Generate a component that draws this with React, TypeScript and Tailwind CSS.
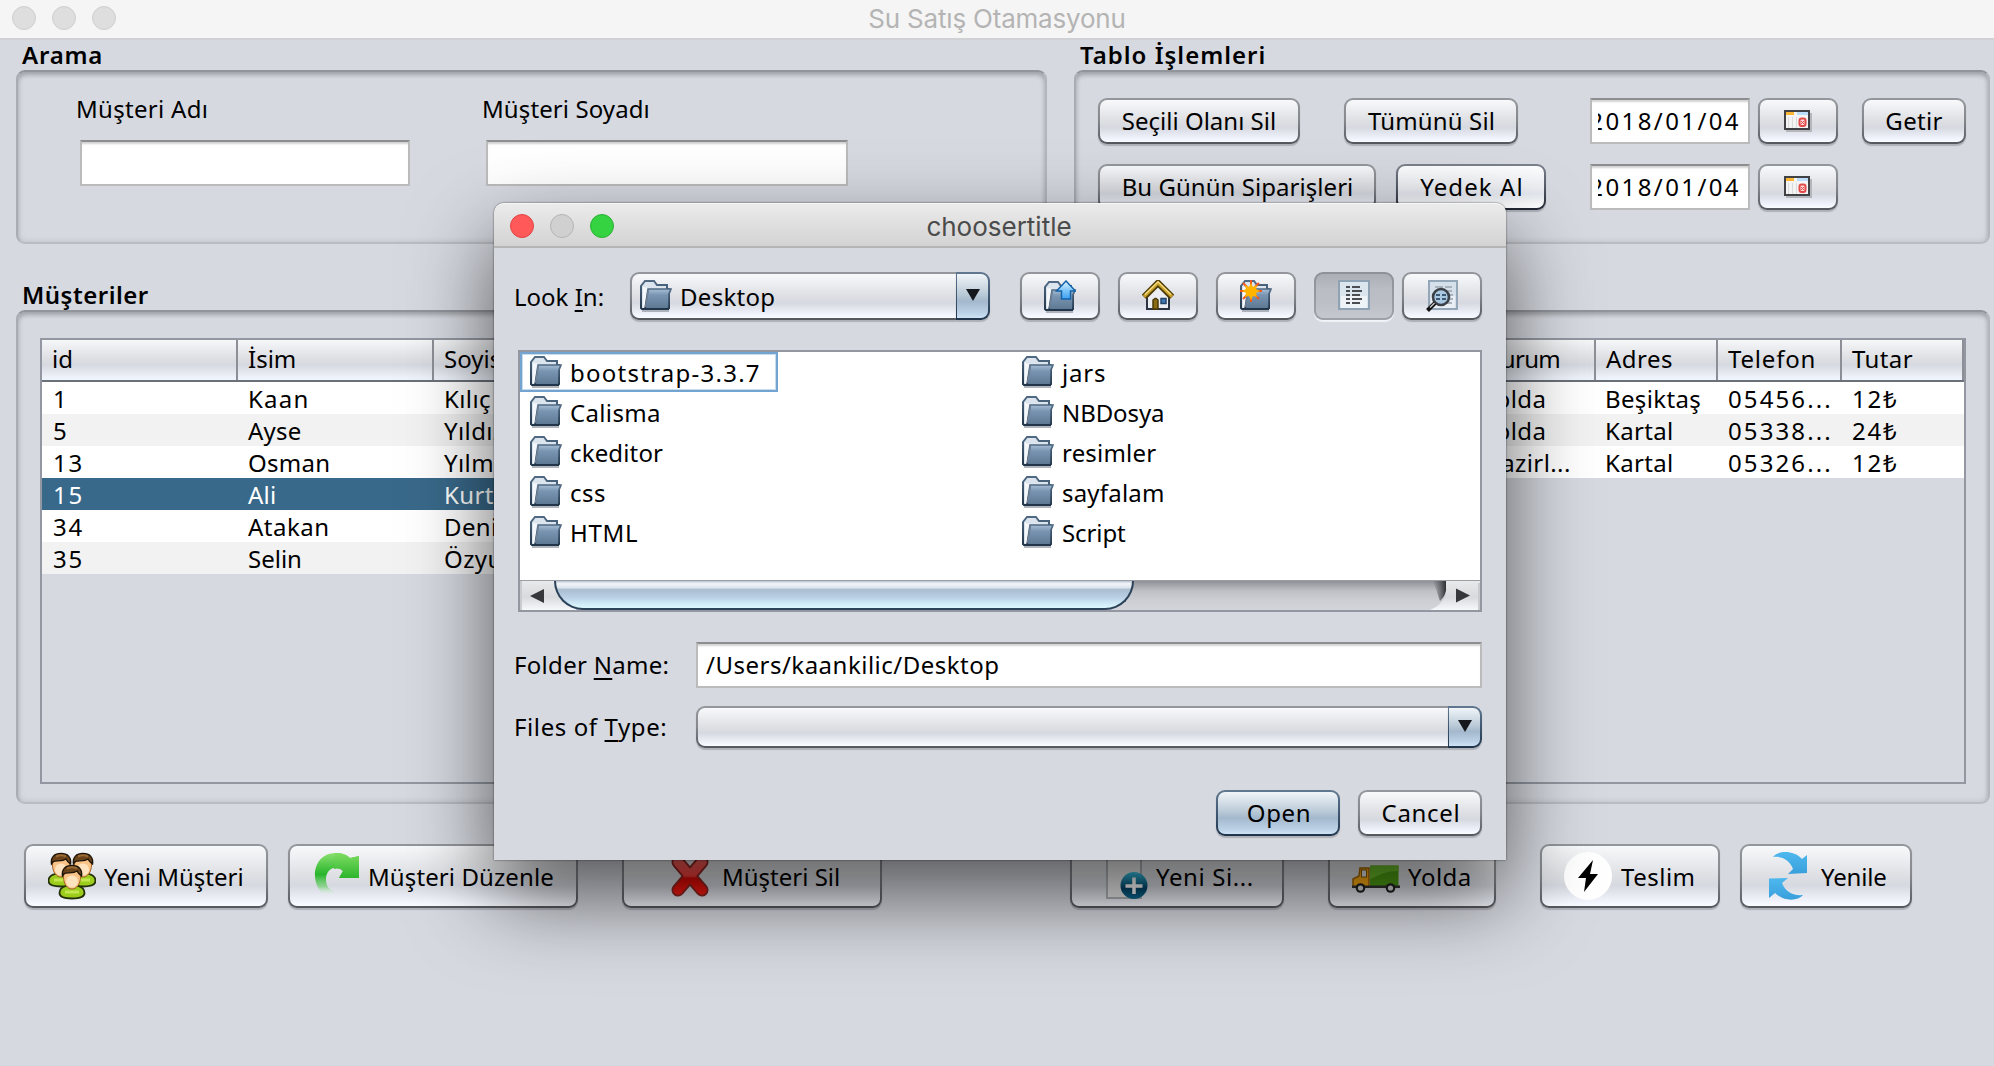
import React from 'react';

type Kids = { children?: React.ReactNode; className?: string };

const fillLight =
  '[background:linear-gradient(#f8f9fb,#dfe0e4_48%,#d6d9e0_66%,#f3f6fe_94%,#fbfcff)_padding-box,linear-gradient(#94979c,#84878c_50%,#54575e)_border-box]';
const fillHover =
  '[background:linear-gradient(#fcfdfe,#eceef2_50%,#e4e7ee_66%,#fdfeff_94%)_padding-box,linear-gradient(#7c828c,#565c68_50%,#1f2532)_border-box]';
const fillBlue =
  '[background:linear-gradient(#f0f5f8,#bccbd8_45%,#a3b8cc_62%,#bdd3e8_90%,#cfe3f5)_padding-box,linear-gradient(#617890,#3f5871_50%,#1f344b)_border-box]';
const fillPressed =
  '[background:linear-gradient(#abaeb5,#babdc4_35%,#bbbec5_60%,#c4c7ce)_padding-box,linear-gradient(#8e9197,#9ea1a7)_border-box]';

function Button({ children, className = '', fill = fillLight }: Kids & { fill?: string }) {
  return (
    <button
      className={`flex shrink-0 items-center rounded-[9px] border-2 border-transparent whitespace-nowrap shadow-[0_2px_1px_#adb0b7] ${fill} ${className}`}
    >
      {children}
    </button>
  );
}

function Group({ title, children, className = '' }: Kids & { title: React.ReactNode }) {
  return (
    <section className={`flex flex-col ${className}`}>
      <h2 className="flex h-[31px] shrink-0 items-center pl-1.5 font-semibold tracking-[0.8px]">{title}</h2>
      <div className="min-h-0 flex-1 rounded-[9px] border-2 border-t-[#919499] border-r-[#b3b6bb] border-b-[#b9bcc2] border-l-[#a9acb1] shadow-[inset_0_4px_5px_-1px_rgba(0,0,0,0.22),inset_0_0_6px_rgba(0,0,0,0.12)]">
        {children}
      </div>
    </section>
  );
}

function Field({ children, className = '' }: Kids) {
  return (
    <div
      className={`flex h-[46px] shrink-0 items-center overflow-hidden border-2 border-[#bbbbbc] border-t-[#8d8e90] bg-white whitespace-nowrap shadow-[inset_0_3px_2px_-1px_#d2d2d4] ${className}`}
    >
      {children}
    </div>
  );
}

function Folder() {
  return (
    <svg viewBox="0 0 32 32" className="size-8 shrink-0">
      <defs>
        <linearGradient id="front" x1="0" y1="0" x2="0" y2="1">
          <stop offset="0" stopColor="#a9bfd6" />
          <stop offset="0.3" stopColor="#7a95b2" />
          <stop offset="1" stopColor="#5c7791" />
        </linearGradient>
        <linearGradient id="edge" x1="0" y1="0" x2="0" y2="1">
          <stop offset="0" stopColor="#506a84" />
          <stop offset="1" stopColor="#22364b" />
        </linearGradient>
      </defs>
      <path d="M2 31h27" stroke="#9fa3ab" strokeWidth="2" opacity=".8" />
      <path d="M1 28V6l4-5h9l3 4h10v4h2v19l-1 1H2z" fill="#dce5ee" stroke="url(#edge)" strokeWidth="2" />
      <path d="M3 7v20h2L8 8z" fill="#f5f8fb" />
      <path d="M8 9h23l-2 5v13l-1 2H5z" fill="url(#front)" stroke="url(#edge)" strokeWidth="1.6" />
      <path d="M8.500 9.500 5.500 27" stroke="#6f8297" strokeWidth="1.600" />
      <path d="M2 29h27" stroke="#22364b" strokeWidth="2" />
    </svg>
  );
}

function FolderUp() {
  return (
    <div className="relative size-8">
      <div className="mt-px">
        <Folder />
      </div>
      <svg viewBox="0 0 32 32" className="absolute inset-0 size-8">
        <defs>
          <linearGradient id="up" x1="0" y1="0" x2="0" y2="1">
            <stop offset="0" stopColor="#e3f5ff" />
            <stop offset="0.5" stopColor="#82c8fb" />
            <stop offset="1" stopColor="#3d9ff0" />
          </linearGradient>
        </defs>
        <path d="M22 1 31.500 11h-5v8h-9v-8h-5z" fill="url(#up)" stroke="#1463a8" strokeWidth="1.500" />
      </svg>
    </div>
  );
}

function Home() {
  return (
    <svg viewBox="0 0 32 32" className="size-8">
      <path d="M5 15v14h22V15L16 5z" fill="#eceef2" stroke="#2b3440" strokeWidth="2" />
      <path d="M11 29v-9l2-1.500h1l2 1.500v9z" fill="#8a6a12" stroke="#4b3a08" strokeWidth="1.500" />
      <rect x="19" y="18.500" width="5" height="5" fill="#3e79b5" stroke="#264668" strokeWidth="1.500" />
      <path d="M2 17 16 3l14 14" fill="none" stroke="#4f3d08" strokeWidth="6.500" />
      <path d="M2 16.500 16 2.800l14 13.700" fill="none" stroke="#c9a227" strokeWidth="3.200" />
      <path d="M3 14.500 16 1.800l13 12.700" fill="none" stroke="#f3df8e" strokeWidth="1.200" />
    </svg>
  );
}

function NewFolder() {
  return (
    <div className="relative size-8">
      <Folder />
      <svg viewBox="0 0 32 32" className="absolute inset-0 size-8">
        <g stroke="#f4581c" strokeWidth="2">
          <path d="M11 0v22M0 11h22M3 3l16 16M19 3 3 19" />
        </g>
        <path d="m11 3 2 4 4-2-1 4 4 2-4 2 1 4-4-1-2 4-2-4-4 1 1-4-4-2 4-2-1-4 4 2z" fill="#ffb400" />
      </svg>
    </div>
  );
}

function ListIcon() {
  return (
    <svg viewBox="0 0 32 32" className="size-8">
      <rect x="1" y="1" width="30" height="28" fill="#dbe5ee" stroke="#8fa2b4" strokeWidth="2" />
      <rect x="3" y="16" width="26" height="12" fill="#eef3f7" />
      <path d="M8 7h4M8 11h4M8 15h4M8 19h4M8 23h4" stroke="#4a4d52" strokeWidth="2" />
      <path d="M14 7h8M14 11h10M14 15h8M14 19h10M14 23h8" stroke="#4a4d52" strokeWidth="2" />
    </svg>
  );
}

function Magnifier() {
  return (
    <svg viewBox="0 0 32 32" className="size-8">
      <rect x="3" y="1" width="28" height="28" fill="#d5e0ea" stroke="#93a7b9" strokeWidth="2" />
      <rect x="5" y="16" width="24" height="12" fill="#e9eff5" />
      <path d="M9 7h8M19 7h7M22 11h4M24 15h3M24 19h3M20 23h6" stroke="#a8b3be" strokeWidth="2" />
      <circle cx="15" cy="17" r="8" fill="#a9c8e2" stroke="#3c4148" strokeWidth="2.600" />
      <path d="M10 15h4M16 15h4M10 19h4M16 19h4" stroke="#3f5872" strokeWidth="2" />
      <path d="M9 23 1.500 30.500" stroke="#111" strokeWidth="4" />
      <path d="M8.500 23 4 27.500" stroke="#c7c9cc" strokeWidth="1.500" />
    </svg>
  );
}

function Calendar() {
  return (
    <svg viewBox="0 0 28 22" className="h-[22px] w-7">
      <path d="M2 21h25V3" fill="none" stroke="#b5b7bc" strokeWidth="2" />
      <rect x="1" y="1" width="24" height="18" fill="#f4f4f4" stroke="#3f4145" strokeWidth="2" />
      <rect x="2" y="2" width="8" height="3" fill="#fdb634" />
      <rect x="13" y="2" width="11" height="3" fill="#bcdcfb" />
      <path d="M4.500 7v11M8.500 7v11M12.500 7v11" stroke="#dadada" />
      <rect x="15.500" y="8.500" width="6" height="7.500" rx="2" fill="#fbd9d7" stroke="#e34b4b" strokeWidth="2" />
      <path d="m17 11 3 3m0-3-3 3" stroke="#e34b4b" />
    </svg>
  );
}

function Head({ x, y }: { x: number; y: number }) {
  return (
    <g transform={`translate(${x} ${y})`}>
      <path
        d="M-6 15c-4 1-6.500 3-6.500 7 0 3.500 4 5.500 12.500 5.500s12.500-2 12.500-5.500c0-4-2.500-6-6.500-7z"
        fill="#9ccc1c"
        stroke="#23300a"
        strokeWidth="1.800"
      />
      <path d="M-7 21h14" stroke="#c3e64e" strokeWidth="3" />
      <path d="M-8.500 6c0-5 3.500-7 8.500-7s8.500 2 8.500 7c0 7-4 12-8.500 12S-8.500 13-8.500 6z" fill="#f9c388" stroke="#a5631f" strokeWidth="1" />
      <ellipse cy="10.500" rx="6" ry="6" fill="#ffe3bf" />
      <path
        d="M-9.500 5c-1-7 3-10.500 9.500-10.500S10.500-2 9.500 5C7.500 3.500 6 2 5 0 1 3-5 1-7.500 2.500c-1 .5-1 1.500-2 2.500z"
        fill="#6b431a"
        stroke="#1d1408"
        strokeWidth="1.400"
      />
      <path d="M-5-2.500c3-1.500 7-1.500 10 0" stroke="#9a6a34" strokeWidth="2" fill="none" />
    </g>
  );
}

function People() {
  return (
    <svg viewBox="0 0 48 48" className="size-12">
      <Head x={13} y={7} />
      <Head x={35} y={7} />
      <Head x={24} y={19} />
    </svg>
  );
}

function Redo() {
  return (
    <svg viewBox="0 0 48 48" className="size-12">
      <defs>
        <linearGradient id="redo" x1="0" y1="0" x2="0" y2="1">
          <stop offset="0" stopColor="#8be070" />
          <stop offset="0.5" stopColor="#27b52b" />
          <stop offset="0.78" stopColor="#6fcf70" stopOpacity=".7" />
          <stop offset="1" stopColor="#fff" stopOpacity="0" />
        </linearGradient>
        <linearGradient id="redoHead" x1="0" y1="0" x2="0" y2="1">
          <stop offset="0" stopColor="#7fdc62" />
          <stop offset="1" stopColor="#2db52d" />
        </linearGradient>
      </defs>
      <path d="M14 44C-2 36-2 2 23 1c8 0 12 2 15 5l9-2v22H27l4-7c-7-7-17-2-17 8 0 7 3 11 9 13-4 3-7 4-9 4z" fill="url(#redo)" />
      <path d="M38 6l9-2v22H27l4-7c-3-3-6-3-9-2L23 1c8 0 12 2 15 5z" fill="url(#redoHead)" />
    </svg>
  );
}

function Cross() {
  return (
    <svg viewBox="0 0 48 48" className="size-12">
      <defs>
        <linearGradient id="cross" gradientUnits="userSpaceOnUse" x1="0" y1="4" x2="0" y2="44">
          <stop offset="0" stopColor="#ff6a65" />
          <stop offset="0.5" stopColor="#f8403c" />
          <stop offset="0.55" stopColor="#dc0a06" />
          <stop offset="1" stopColor="#ff1b12" />
        </linearGradient>
      </defs>
      <path d="M12 10 36 38M36 10 12 38" stroke="#8e2622" strokeWidth="13" strokeLinecap="round" />
      <path d="M12 10 36 38M36 10 12 38" stroke="url(#cross)" strokeWidth="9.500" strokeLinecap="round" />
    </svg>
  );
}

function NewOrder() {
  return (
    <svg viewBox="0 0 48 48" className="size-12">
      <rect x="7" y="1" width="34" height="45" fill="#ededed" stroke="#b2b4b8" strokeWidth="2" />
      <defs>
        <linearGradient id="ball" x1="0" y1="0" x2="0" y2="1">
          <stop offset="0" stopColor="#39c6ea" />
          <stop offset="0.6" stopColor="#044468" />
          <stop offset="1" stopColor="#0b6f98" />
        </linearGradient>
      </defs>
      <circle cx="34" cy="33.500" r="13.500" fill="url(#ball)" />
      <path d="M34 25.500v16.500M25.500 34h17" stroke="#fff" strokeWidth="3.500" />
    </svg>
  );
}

function Truck() {
  return (
    <svg viewBox="0 0 48 48" className="size-12">
      <path d="M1 34v-7l6-3 1-8h9v19H2z" fill="#ffae14" stroke="#a86a00" strokeWidth="1.500" />
      <rect x="9.500" y="18" width="5" height="7" fill="#e6eef5" stroke="#8a5a00" />
      <rect x="18" y="13.500" width="28.500" height="20.500" fill="#4f9f14" />
      <path d="M18 13.500h28.500v6C36 18 28 23 18 27z" fill="#6cc02a" />
      <rect y="33.500" width="48" height="2.500" fill="#333" />
      <circle cx="8.500" cy="36" r="4.800" fill="#222" />
      <circle cx="8.500" cy="36" r="2.600" fill="#ddd" />
      <circle cx="38.500" cy="36" r="4.800" fill="#222" />
      <circle cx="38.500" cy="36" r="2.600" fill="#ddd" />
    </svg>
  );
}

function Bolt() {
  return (
    <svg viewBox="0 0 48 48" className="size-12">
      <circle cx="24" cy="24" r="24" fill="#fff" />
      <path d="M29 8 14 26h8l-2 14 14-18h-8z" fill="#000" />
    </svg>
  );
}

function Refresh() {
  return (
    <svg viewBox="0 0 48 48" className="size-12">
      <defs>
        <linearGradient id="rf" x1="0" y1="0" x2="0" y2="1">
          <stop offset="0" stopColor="#4db8ee" />
          <stop offset="1" stopColor="#3a9fdc" />
        </linearGradient>
      </defs>
      <path d="M9 5C13-1 29-3 38 7l5-4v18l-19 1 5-5C26 9 19 4 9 5z" fill="url(#rf)" />
      <path d="M39 43c-5 6-19 7-28-2l-6 5V26.500L24 26l-6 5c3 8 10 13 21 12z" fill="url(#rf)" />
    </svg>
  );
}

const header =
  'flex items-center bg-[linear-gradient(#f6f7f9,#dfe0e4_45%,#d6d9e0_62%,#eff3fb_95%)] pb-0.5 border-r-2 border-[#8c9096]';

const customers = [
  ['1', 'Kaan', 'Kılıç', 'tracking-[1.2px]'],
  ['5', 'Ayse', 'Yıldız', 'tracking-[0.2px]'],
  ['13', 'Osman', 'Yılmaz', 'tracking-[0.3px]'],
  ['15', 'Ali', 'Kurt', 'tracking-[0.2px]'],
  ['34', 'Atakan', 'Deniz', 'tracking-[0.5px]'],
  ['35', 'Selin', 'Özyurt', 'tracking-[0px]'],
];

const orders = [
  ['Yolda', 'Beşiktaş', '05456...', '12₺'],
  ['Yolda', 'Kartal', '05338...', '24₺'],
  ['Hazirl...', 'Kartal', '05326...', '12₺'],
];

function CustomerTable() {
  return (
    <div className="w-[900px] border-2 border-[#9297a1]">
      <div className="grid h-[42px] grid-cols-[196px_196px_1fr] border-b-2 border-[#6b707a]">
        <div className={`${header} pl-2.5`}>id</div>
        <div className={`${header} pl-2.5`}>İsim</div>
        <div className={`${header} pl-2.5`}>Soyisim</div>
      </div>
      {customers.map(([id, name, surname, track], i) => (
        <div
          key={id}
          className={`grid h-8 grid-cols-[196px_196px_1fr] items-start pt-px leading-[31px] ${
            i === 3 ? 'bg-[#39698a] text-white' : i % 2 ? 'bg-[#f2f2f2]' : 'bg-white'
          }`}
        >
          <span className="pl-[11px] tracking-[1.8px]">{id}</span>
          <span className={`pl-2.5 ${track}`}>{name}</span>
          <span className="pl-2.5 tracking-[0.4px]">{surname}</span>
        </div>
      ))}
    </div>
  );
}

function OrderTable() {
  const cols = 'grid-cols-[1fr_122px_124px_122px]';
  return (
    <div className="w-[900px] border-2 border-[#9297a1]">
      <div className={`grid h-[42px] ${cols} border-b-2 border-[#6b707a]`}>
        <div className={`${header} justify-end`}>
          <span className="w-[110px] tracking-[-0.7px]">Durum</span>
        </div>
        <div className={`${header} pl-2.5 tracking-[0.5px]`}>Adres</div>
        <div className={`${header} pl-2.5 tracking-[0.8px]`}>Telefon</div>
        <div className={`${header} pl-2.5 tracking-[0.4px]`}>Tutar</div>
      </div>
      {orders.map(([state, city, phone, sum], i) => (
        <div
          key={phone}
          className={`grid h-8 ${cols} items-start pt-px leading-[31px] ${i % 2 ? 'bg-[#f2f2f2]' : 'bg-white'}`}
        >
          <span className="flex justify-end">
            <span className="w-[113px] tracking-[0.4px]">{state}</span>
          </span>
          <span className="pl-[9px] tracking-[0.35px]">{city}</span>
          <span className="pl-2.5 tracking-[2.1px]">{phone}</span>
          <span className="pl-2.5 tracking-[1.8px]">{sum}</span>
        </div>
      ))}
    </div>
  );
}

function MainWindow() {
  return (
    <div className="flex h-full flex-col">
      <header className="flex h-10 shrink-0 items-center border-b-2 border-[#d0d1d4] bg-[#f5f5f5] px-3">
        <div className="flex w-40 gap-4 pb-0.5">
          <i className="size-6 rounded-full border border-[#cfcfcf] bg-[#dedede]" />
          <i className="size-6 rounded-full border border-[#cfcfcf] bg-[#dedede]" />
          <i className="size-6 rounded-full border border-[#cfcfcf] bg-[#dedede]" />
        </div>
        <h1 className="flex-1 pr-40 text-center font-[Inter] text-[26px] leading-8 tracking-[-0.2px] text-[#b4b4b4]">
          Su Satış Otamasyonu
        </h1>
      </header>

      <div className="-mt-px flex h-[205px] shrink-0 gap-[27px] pl-4">
        <Group title="Arama" className="w-[1031px]">
          <div className="flex pt-[21px] pl-[58px]">
            <label className="flex w-[406px] flex-col tracking-[0.3px]">
              <span className="h-8">Müşteri Adı</span>
              <Field className="mt-[15px] ml-1 w-[330px]" />
            </label>
            <label className="flex flex-col tracking-[0.1px]">
              <span className="h-8">Müşteri Soyadı</span>
              <Field className="mt-[15px] ml-1 w-[362px]" />
            </label>
          </div>
        </Group>

        <Group title={<span className="tracking-[1px]">Tablo İşlemleri</span>} className="w-[916px]">
          <div className="flex flex-col gap-5 pt-[26px] pl-[22px]">
            <div className="flex">
              <Button className="h-[46px] w-[202px] justify-center">Seçili Olanı Sil</Button>
              <Button className="ml-11 h-[46px] w-[174px] justify-center pl-px tracking-[0.15px]">Tümünü Sil</Button>
              <Field className="ml-[72px] w-40 pr-[7px] pl-1.5">
                <div className="flex w-full justify-end overflow-hidden tracking-[2.4px]">2018/01/04</div>
              </Field>
              <Button className="ml-2 h-[46px] w-20 justify-center">
                <Calendar />
              </Button>
              <Button className="ml-6 h-[46px] w-[104px] justify-center tracking-[0.3px]">Getir</Button>
            </div>
            <div className="flex">
              <Button className="h-[46px] w-[278px] justify-center pl-px tracking-[0.05px]">Bu Günün Siparişleri</Button>
              <Button fill={fillHover} className="ml-5 h-[46px] w-[150px] justify-center pl-0.5 tracking-[1.1px]">
                Yedek Al
              </Button>
              <Field className="ml-11 w-40 pr-[7px] pl-1.5">
                <div className="flex w-full justify-end overflow-hidden tracking-[2.4px]">2018/01/04</div>
              </Field>
              <Button className="ml-2 h-[46px] w-20 justify-center">
                <Calendar />
              </Button>
            </div>
          </div>
        </Group>
      </div>

      <Group title={<span className="tracking-[0.5px]">Müşteriler</span>} className="mt-[35px] ml-4 h-[525px] w-[1974px] shrink-0">
        <div className="flex h-[472px] justify-between pt-[26px] pr-[22px] pl-[22px]">
          <CustomerTable />
          <OrderTable />
        </div>
      </Group>

      <footer className="mt-10 flex pl-6">
        <Button className="h-16 w-[244px] gap-2 pl-[22px]">
          <People />
          <span className="mt-0.5">Yeni Müşteri</span>
        </Button>
        <Button className="ml-5 h-16 w-[290px] gap-2 pl-[22px] tracking-[0.1px]">
          <Redo />
          <span className="mt-0.5">Müşteri Düzenle</span>
        </Button>
        <Button className="ml-11 h-16 w-[260px] gap-2 pl-[42px]">
          <Cross />
          <span className="mt-0.5">Müşteri Sil</span>
        </Button>
        <Button className="ml-[188px] h-16 w-[214px] gap-2 pl-7 tracking-[0.6px]">
          <NewOrder />
          <span className="mt-0.5">Yeni Si...</span>
        </Button>
        <Button className="ml-11 h-16 w-[168px] gap-2 pl-[22px] tracking-[0.5px]">
          <Truck />
          <span className="mt-0.5">Yolda</span>
        </Button>
        <Button className="ml-11 h-16 w-[180px] gap-2 pl-[22px] tracking-[0.5px]">
          <Bolt />
          <span className="mt-0.5 pl-px">Teslim</span>
        </Button>
        <Button className="ml-5 h-16 w-[172px] gap-2 pl-[22px] tracking-[-0.2px]">
          <Refresh />
          <span className="mt-0.5 pl-px">Yenile</span>
        </Button>
      </footer>
    </div>
  );
}

const files: [string, string][] = [
  ['bootstrap-3.3.7', 'tracking-[1.250px]'],
  ['Calisma', 'tracking-[0.350px]'],
  ['ckeditor', 'tracking-[0.150px]'],
  ['css', 'tracking-[0.500px]'],
  ['HTML', 'tracking-[0.700px]'],
  ['jars', 'tracking-[0.800px]'],
  ['NBDosya', 'tracking-[-0.100px]'],
  ['resimler', 'tracking-[0.200px]'],
  ['sayfalam', 'tracking-[0.200px]'],
  ['Script', 'tracking-[-0.100px]'],
];

function Combo({ children, className = '' }: Kids) {
  return (
    <div className={`flex ${className}`}>
      <div
        className={`flex flex-1 items-center rounded-l-[9px] border-2 border-r-0 border-transparent shadow-[0_2px_1px_#adb0b7] ${fillLight}`}
      >
        {children}
      </div>
      <div
        className={`flex w-[34px] items-center justify-center rounded-r-[9px] border-2 border-l border-transparent shadow-[0_2px_1px_#adb0b7] ${fillBlue}`}
      >
        <svg viewBox="0 0 14 12" className="-mt-0.5 h-3 w-3.5">
          <path d="M0 0h14L7 12z" fill="#15181c" />
        </svg>
      </div>
    </div>
  );
}

function ScrollBar() {
  return (
    <div className="relative flex h-[30px] border-t border-[#9b9ea4] bg-[linear-gradient(#8f9197,#bfc1c6_35%,#cdcfd4_70%,#d3d5da)]">
      <div className="flex w-14 items-center border-l-2 border-[#c9cbcf] bg-[linear-gradient(#e8e9eb,#d8dadd_55%,#f6f8fb)] pl-2">
        <svg viewBox="0 0 14 14" className="h-3.5 w-3.5">
          <path d="M14 0v14L0 7z" fill="#35373a" />
        </svg>
      </div>
      <div className="ml-auto flex w-[50px] items-center justify-end">
        <svg viewBox="0 0 50 29" className="h-[29px] w-[50px]">
          <defs>
            <linearGradient id="sbEnd" x1="0" y1="0" x2="0" y2="1">
              <stop offset="0" stopColor="#e8e9eb" />
              <stop offset="0.55" stopColor="#d8dadd" />
              <stop offset="1" stopColor="#f6f8fb" />
            </linearGradient>
            <linearGradient id="sbDark" x1="0" y1="0" x2="1" y2="0">
              <stop offset="0" stopColor="#55575b" stopOpacity="0" />
              <stop offset="1" stopColor="#2d2f33" />
            </linearGradient>
          </defs>
          <path d="M2 0h14v10c-1 4-3 7-6 10C7 12 6 5 2 0z" fill="url(#sbDark)" />
          <path d="M16 0h34v29H0c10-4 16-11 16-20z" fill="url(#sbEnd)" />
          <path d="M49 2v27" stroke="#c9cbcf" strokeWidth="2" />
          <path d="M26 7.500v14l14-7z" fill="#35373a" />
        </svg>
      </div>
      <div className="absolute top-0 left-[34px] h-[29px] w-[580px] rounded-b-[29px] border-x-2 border-b-2 border-[#2b4259] bg-[linear-gradient(#b9c6d1,#f2f5f9_10%,#dde4ec_25%,#a9bdd0_32%,#b9cfe4_60%,#d2ebf8_85%,#def8fe)]" />
    </div>
  );
}

function Dialog() {
  return (
    <div className="absolute top-[203px] left-[494px] flex h-[657px] w-[1012px] flex-col overflow-visible rounded-t-[10px] bg-[#d6d9e0] shadow-[0_0_2px_rgba(0,0,0,0.7),0_36px_84px_rgba(0,0,0,0.62)]">
      <header className="flex h-[45px] shrink-0 items-center rounded-t-[10px] border-t border-b-2 border-t-[#f6f6f6] border-b-[#b5b5b5] bg-[linear-gradient(#ebebeb,#d3d3d3)] px-4">
        <div className="flex w-[104px] shrink-0 gap-4 pt-px">
          <i className="size-6 shrink-0 rounded-full border border-[#e04443] bg-[#ff5a59]" />
          <i className="size-6 shrink-0 rounded-full border border-[#b4b4b4] bg-[#d0d0d0]" />
          <i className="size-6 shrink-0 rounded-full border border-[#2bb134] bg-[#35d341]" />
        </div>
        <h2 className="flex-1 pt-[3px] pr-[106px] text-center font-[Inter] text-[26px] leading-8 tracking-[0px] text-[#4b4b4b]">
          choosertitle
        </h2>
      </header>

      <div className="flex flex-1 flex-col px-6 pt-6">
        <div className="flex h-12 items-center">
          <div className="mt-0.5 mr-1 -ml-1 w-28">
            Look <u className="decoration-2 underline-offset-4">I</u>n:
          </div>
          <Combo className="h-12 w-[360px]">
            <span className="flex items-center gap-1.5 pl-2 tracking-[0.3px]">
              <Folder />
              <span className="mt-0.5 pl-0.5">Desktop</span>
            </span>
          </Combo>
          <Button className="ml-[30px] h-12 w-20 justify-center">
            <FolderUp />
          </Button>
          <Button className="ml-[18px] h-12 w-20 justify-center">
            <Home />
          </Button>
          <Button className="ml-[18px] h-12 w-20 justify-center">
            <NewFolder />
          </Button>
          <Button fill={fillPressed} className="ml-[18px] h-12 w-20 justify-center shadow-[0_2px_1px_#f2f4f7]">
            <ListIcon />
          </Button>
          <Button className="ml-2 h-12 w-20 justify-center">
            <Magnifier />
          </Button>
        </div>

        <div className="mt-[30px] flex h-[262px] flex-col border-2 border-[#9297a1] bg-white">
          <div className="grid h-[228px] grid-flow-col grid-cols-[492px_1fr] grid-rows-[repeat(5,40px)]">
            {files.map(([name, track], i) => (
              <div
                key={name}
                className={`flex items-center gap-2 ${
                  i === 0
                    ? 'w-[258px] border-2 border-[#73a4d1] pl-2 shadow-[inset_0_0_0_1px_#c7dcef]'
                    : 'pl-2.5'
                } ${track}`}
              >
                <Folder />
                <span className="mt-0.5">{name}</span>
              </div>
            ))}
          </div>
          <ScrollBar />
        </div>

        <div className="mt-[30px] flex items-center">
          <div className="-ml-1 w-[182px] tracking-[0.3px]">
            Folder <u className="decoration-2 underline-offset-4">N</u>ame:
          </div>
          <Field className="w-[786px] pl-2 tracking-[0.5px]">/Users/kaankilic/Desktop</Field>
        </div>
        <div className="mt-[18px] flex items-center">
          <div className="-ml-1 w-[182px] tracking-[0.6px]">
            Files of <u className="decoration-2 underline-offset-4">T</u>ype:
          </div>
          <Combo className="h-[42px] w-[786px]" />
        </div>
        <div className="mt-[42px] flex justify-end gap-[18px]">
          <Button fill={fillBlue} className="h-[46px] w-[124px] justify-center pl-0.5 tracking-[0.6px]">
            Open
          </Button>
          <Button className="h-[46px] w-[124px] justify-center pl-0.5 tracking-[0.7px]">Cancel</Button>
        </div>
      </div>
    </div>
  );
}

export default function App() {
  return (
    <div className="relative h-[1066px] w-[1994px] overflow-hidden bg-[#d6d9e0] font-['Noto_Sans',sans-serif] text-[24px] leading-8 text-black">
      <MainWindow />
      <Dialog />
    </div>
  );
}
